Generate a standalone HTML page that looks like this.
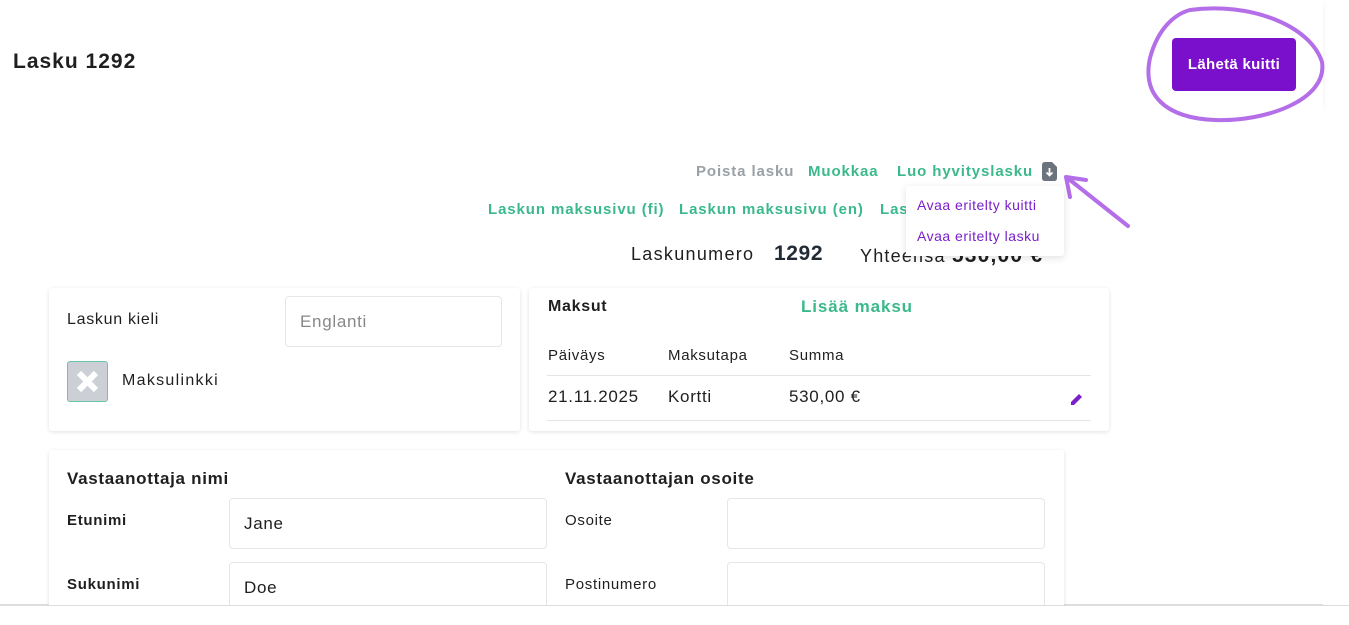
<!DOCTYPE html>
<html><head><meta charset="utf-8"><style>
*{box-sizing:border-box;margin:0;padding:0}
body{width:1349px;height:625px;background:#fff;font-family:"Liberation Sans",sans-serif;position:relative;overflow:hidden;color:#1f1f1f;letter-spacing:.7px}
.abs{position:absolute;white-space:nowrap}
.hdr{position:absolute;left:0;top:0;width:1323px;height:108px;background:#fff;box-shadow:0 2px 6px rgba(0,0,0,.06)}
.main{position:absolute;left:0;top:108px;width:1323px;height:497px;background:#fff;border-bottom:1px solid #ddd}
.card{position:absolute;background:#fff;box-shadow:0 1px 4px rgba(0,0,0,.12);border-radius:3px}
.inp{position:absolute;border:1px solid #e6e6e6;border-radius:4px;background:#fff;font-size:17px;padding-left:14px;display:flex;align-items:center}
.g{color:#3bb98c;font-weight:bold;font-size:15px;letter-spacing:.9px}
.p{color:#7a1fc9;font-size:14px;letter-spacing:.5px}
</style></head><body>
<div class="hdr"></div>
<div class="main"></div>
<div class="abs" style="left:13px;top:50px;font-size:21px;font-weight:bold;letter-spacing:1px">Lasku 1292</div>
<div class="abs" style="left:1172px;top:38px;width:124px;height:53px;background:#7a0fcc;border-radius:4px;color:#fff;font-weight:bold;font-size:15px;letter-spacing:.3px;display:flex;align-items:center;justify-content:center">Lähetä kuitti</div>
<svg class="abs" style="left:0;top:0" width="1349" height="140"><path d="M1190 10 C1250 2 1310 25 1322 62 C1328 100 1265 122 1215 120 C1165 118 1142 95 1150 58 C1158 28 1175 14 1190 10 Z" fill="none" stroke="#b46ee8" stroke-width="4"/></svg>
<svg class="abs" style="left:1060px;top:170px" width="75" height="62"><path d="M68 56 L10 10 M6 7 L26 10 M6 7 L10 27" stroke="#b46ee8" stroke-width="4" fill="none" stroke-linecap="round"/></svg>
<div class="abs g" style="left:696px;top:163px;color:#9aa0a6">Poista lasku</div>
<div class="abs g" style="left:808px;top:163px">Muokkaa</div>
<div class="abs g" style="left:897px;top:163px">Luo hyvityslasku</div>
<svg class="abs" style="left:1042px;top:162px" width="15" height="19"><path d="M0 3 Q0 0 3 0 H10 L15 5 V16 Q15 19 12 19 H3 Q0 19 0 16Z" fill="#6b747c"/><path d="M7.5 6 V13 M4.5 10.5 L7.5 13.5 L10.5 10.5" stroke="#fff" stroke-width="1.8" fill="none"/></svg>
<div class="abs g" style="left:488px;top:201px">Laskun maksusivu (fi)</div>
<div class="abs g" style="left:679px;top:201px">Laskun maksusivu (en)</div>
<div class="abs g" style="left:880px;top:201px">Las</div>
<div class="abs" style="left:631px;top:244px;font-size:18px;letter-spacing:1.3px">Laskunumero</div>
<div class="abs" style="left:774px;top:242px;font-size:21px;font-weight:bold;color:#222a35;letter-spacing:.6px">1292</div>
<div class="abs" style="left:860px;top:244px;font-size:18px;letter-spacing:1.2px">Yhteensä <b style="font-size:21px">530,00 €</b></div>
<div class="card" style="left:906px;top:186px;width:158px;height:70px;box-shadow:0 2px 8px rgba(0,0,0,.12)"></div>
<div class="abs p" style="left:917px;top:197px">Avaa eritelty kuitti</div>
<div class="abs p" style="left:917px;top:228px">Avaa eritelty lasku</div>
<div class="card" style="left:49px;top:288px;width:471px;height:143px"></div>
<div class="abs" style="left:67px;top:311px;font-size:16px">Laskun kieli</div>
<div class="inp" style="left:285px;top:296px;width:217px;height:51px;color:#888">Englanti</div>
<div class="abs" style="left:67px;top:361px;width:41px;height:41px;background:#ccd0d6;border:1px solid #6cc4a6;border-radius:3px"><svg width="39" height="39"><path d="M11 11 L28 28 M28 11 L11 28" stroke="#fff" stroke-width="6"/></svg></div>
<div class="abs" style="left:122px;top:372px;font-size:16px;letter-spacing:1.3px">Maksulinkki</div>
<div class="card" style="left:529px;top:288px;width:580px;height:143px"></div>
<div class="abs" style="left:548px;top:298px;font-size:16px;font-weight:bold">Maksut</div>
<div class="abs g" style="left:801px;top:297px;font-size:17px">Lisää maksu</div>
<div class="abs" style="left:548px;top:347px;font-size:15px">Päiväys</div>
<div class="abs" style="left:668px;top:347px;font-size:15px">Maksutapa</div>
<div class="abs" style="left:789px;top:347px;font-size:15px">Summa</div>
<div class="abs" style="left:547px;top:375px;width:544px;border-top:1px solid #e4e4e4"></div>
<div class="abs" style="left:547px;top:420px;width:544px;border-top:1px solid #e4e4e4"></div>
<div class="abs" style="left:548px;top:387px;font-size:17px">21.11.2025</div>
<div class="abs" style="left:668px;top:387px;font-size:17px">Kortti</div>
<div class="abs" style="left:789px;top:387px;font-size:17px">530,00 €</div>
<svg class="abs" style="left:1070px;top:392px" width="14" height="14"><path d="M1 13 L1 10 L9 2 L12 5 L4 13Z" fill="#7a1fc9"/></svg>
<div class="card" style="left:49px;top:450px;width:1015px;height:170px"></div>
<div class="abs" style="left:67px;top:469px;font-size:17px;font-weight:bold">Vastaanottaja nimi</div>
<div class="abs" style="left:565px;top:469px;font-size:17px;font-weight:bold">Vastaanottajan osoite</div>
<div class="abs" style="left:67px;top:512px;font-size:15px;font-weight:bold">Etunimi</div>
<div class="abs" style="left:67px;top:576px;font-size:15px;font-weight:bold">Sukunimi</div>
<div class="abs" style="left:565px;top:512px;font-size:15px">Osoite</div>
<div class="abs" style="left:565px;top:576px;font-size:15px">Postinumero</div>
<div class="inp" style="left:229px;top:498px;width:318px;height:51px">Jane</div>
<div class="inp" style="left:229px;top:562px;width:318px;height:51px">Doe</div>
<div class="inp" style="left:727px;top:498px;width:318px;height:51px"></div>
<div class="inp" style="left:727px;top:562px;width:318px;height:51px"></div>
<div class="abs" style="left:0;top:605px;width:1349px;height:20px;background:#fff;border-top:1px solid #ddd"></div>
</body></html>
